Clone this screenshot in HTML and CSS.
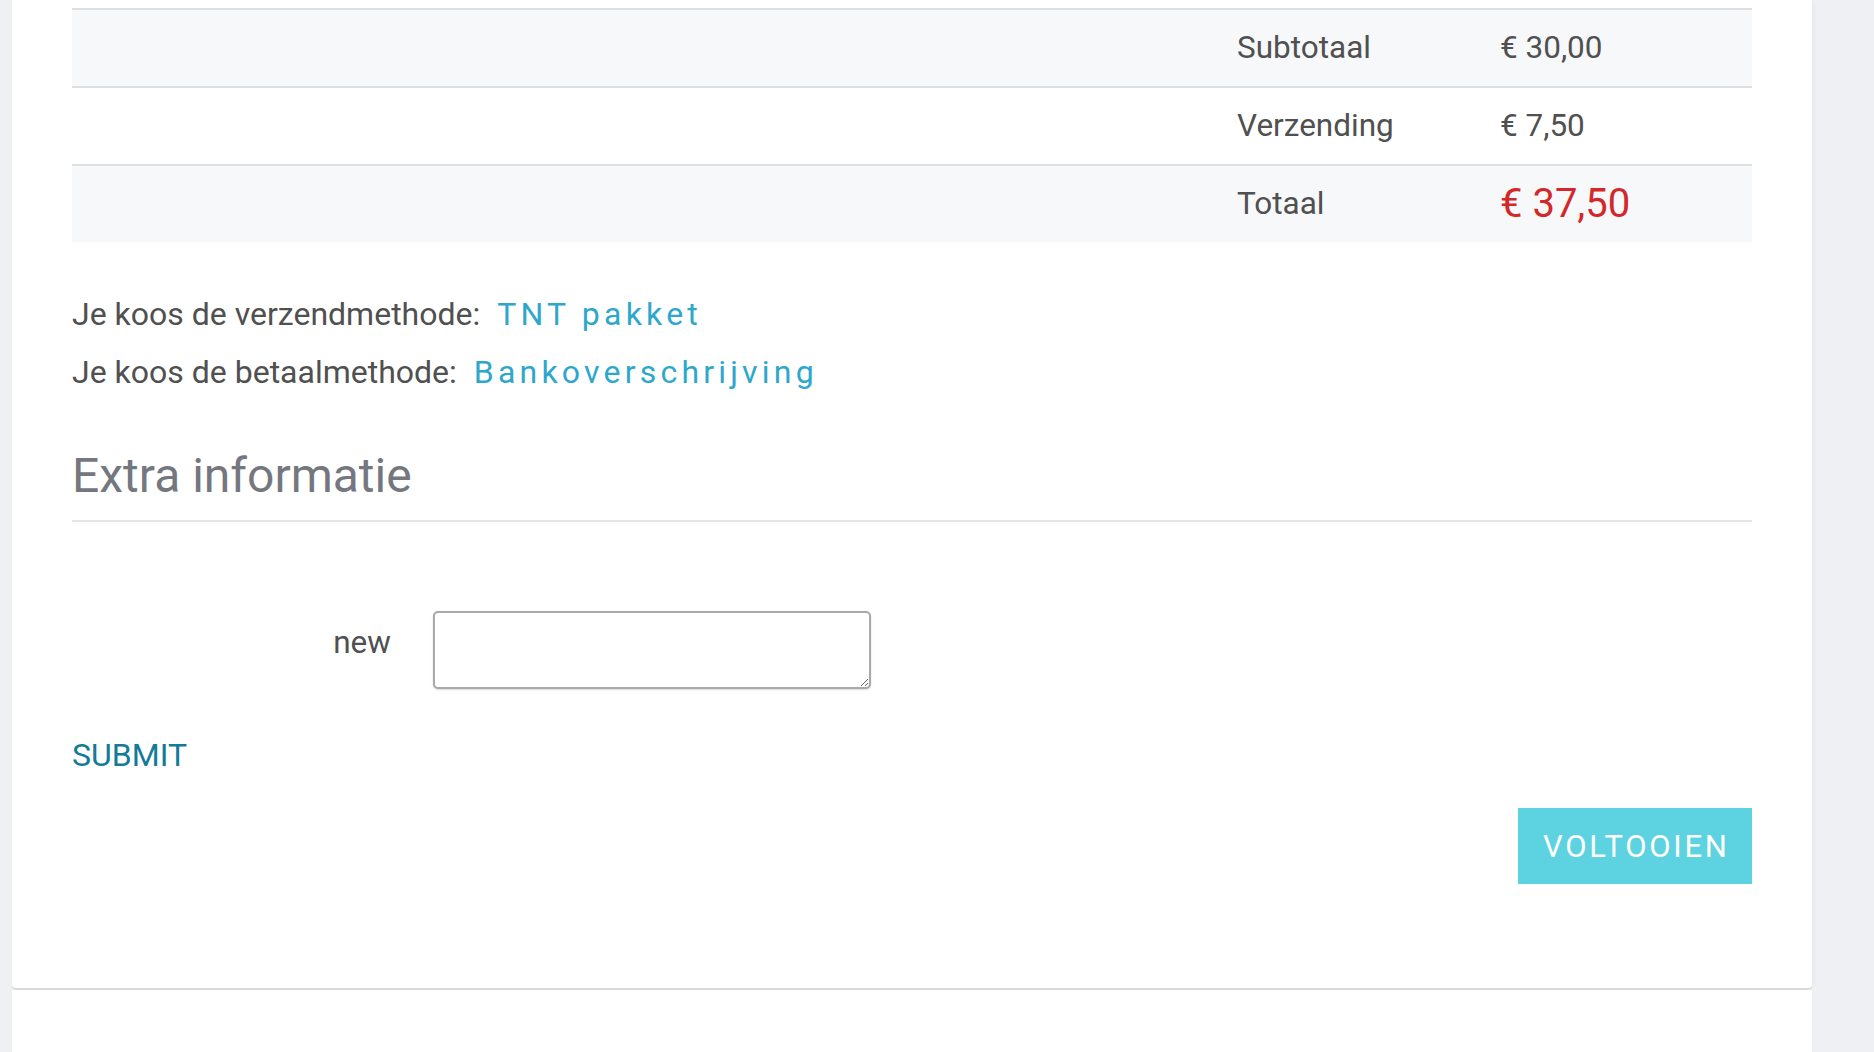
FILE: index.html
```html
<!DOCTYPE html>
<html lang="nl">
<head>
<meta charset="utf-8">
<title>Afrekenen</title>
<link rel="stylesheet" href="styles.css">
</head>
<body>
<div class="page">
  <div class="card">
    <div class="totals">
      <div class="totals-row striped">
        <span class="cell-empty"></span>
        <span class="cell-label">Subtotaal</span>
        <span class="cell-value">€ 30,00</span>
      </div>
      <div class="totals-row">
        <span class="cell-empty"></span>
        <span class="cell-label">Verzending</span>
        <span class="cell-value">€ 7,50</span>
      </div>
      <div class="totals-row striped">
        <span class="cell-empty"></span>
        <span class="cell-label">Totaal</span>
        <span class="cell-value total-price">€ 37,50</span>
      </div>
    </div>

    <div class="choices">
      <p class="choice-line">Je koos de verzendmethode: <span class="choice">TNT pakket</span></p>
      <p class="choice-line">Je koos de betaalmethode: <span class="choice">Bankoverschrijving</span></p>
    </div>

    <h2 class="section-title">Extra informatie</h2>

    <form class="extra-form">
      <div class="field">
        <label class="field-label" for="new">new</label>
        <textarea class="field-input" id="new"></textarea>
      </div>
      <a class="submit-link" href="#">SUBMIT</a>
      <div class="actions">
        <button type="button" class="btn-finish">VOLTOOIEN</button>
      </div>
    </form>
  </div>
  <div class="card card-next"></div>
</div>
</body>
</html>
```

FILE: styles.css
```css
html, body {
  margin: 0;
  padding: 0;
}

body {
  background: #eff0f3;
  font-family: Roboto, "Liberation Sans", Arial, sans-serif;
  color: #505050;
  font-size: 31.5px;
}

.page {
  width: 1800px;
  margin-left: 12px;
}

.card {
  background: #ffffff;
  border-radius: 0 0 4px 4px;
  padding: 8px 60px 104px;
  box-shadow: 0 2px 0 #d8dbde, 2px 0 4px rgba(0, 0, 0, 0.03);
  margin-bottom: 2px;
}

.card-next {
  padding: 0;
  height: 80px;
  border-radius: 0;
  box-shadow: none;
}

/* totals table */
.totals-row {
  display: grid;
  grid-template-columns: 1fr 263px 252px;
  align-items: center;
  height: 75px;
  padding-bottom: 1px;
  border-top: 2px solid #dedfe1;
}

.totals-row.striped {
  background: #f7f8fa;
}

.cell-label,
.cell-value {
  white-space: nowrap;
}

.total-price {
  color: #d3282a;
  font-size: 40px;
}

/* chosen methods */
.choices {
  margin-top: 43px;
}

.choice-line {
  margin: 0;
  line-height: 58px;
  font-size: 32px;
}

.choice {
  color: #2ea7cc;
  letter-spacing: 4.2px;
  margin-left: 9px;
}

/* section heading */
.section-title {
  margin: 46px 0 0;
  font-size: 48px;
  font-weight: 400;
  line-height: 58px;
  color: #75777f;
  padding-bottom: 15px;
  border-bottom: 2px solid #e6e6e6;
}

/* form */
.extra-form {
  margin: 0;
}

.field {
  display: flex;
  align-items: flex-start;
  margin-top: 89px;
}

.field-label {
  width: 319px;
  text-align: right;
  line-height: 58px;
  padding-top: 3px;
  margin-right: 42px;
}

.field-input {
  width: 438px;
  height: 78px;
  box-sizing: border-box;
  border: 2px solid #a9a9a9;
  border-radius: 5px;
  box-shadow: 0 1px 2px rgba(0, 0, 0, 0.15);
  margin: 0;
  padding: 4px;
  font-family: inherit;
  font-size: 20px;
}

.submit-link {
  display: block;
  margin-top: 37px;
  line-height: 58px;
  color: #137a98;
  text-decoration: none;
  font-size: 32px;
}

.actions {
  display: flex;
  justify-content: flex-end;
  margin-top: 24px;
}

.btn-finish {
  width: 234px;
  height: 76px;
  border: none;
  border-radius: 0;
  background: #5dd2e0;
  color: #ffffff;
  font-family: Roboto, "Liberation Sans", Arial, sans-serif;
  font-size: 31px;
  letter-spacing: 2.7px;
  padding: 0 0 0 2.7px;
  cursor: pointer;
}
```
